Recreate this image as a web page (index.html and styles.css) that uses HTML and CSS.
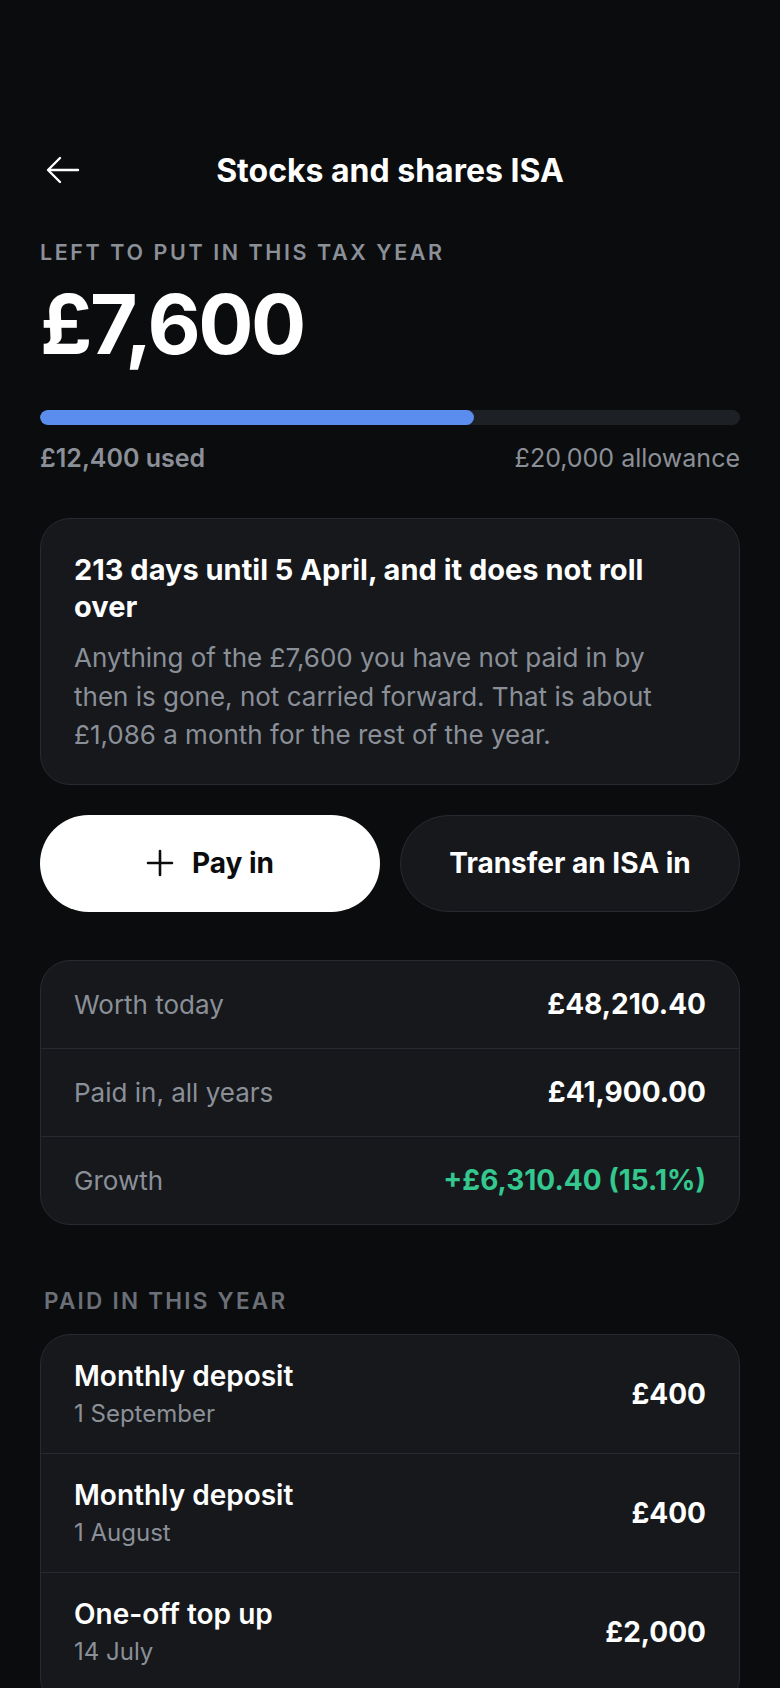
FILE: index.html
```html
<!DOCTYPE html>
<html lang="en">

<head>
    <meta charset="UTF-8">
    <meta name="viewport" content="width=device-width, initial-scale=1.0">
    <link rel="stylesheet" href="styles.css">
    <title>Stocks and shares ISA</title>
</head>

<body>
    <div class="screen">
        <header class="topbar">
            <button type="button" class="back" aria-label="Back">
                <svg width="34" height="28" viewBox="0 0 34 28" fill="none" stroke="#fff" stroke-width="2.4"
                    stroke-linecap="round" stroke-linejoin="round">
                    <path d="M32 14H3" />
                    <path d="M14 2L2 14l12 12" />
                </svg>
            </button>
            <h1 class="title">Stocks and shares ISA</h1>
        </header>

        <!-- Allowance left -->
        <section class="allowance">
            <p class="eyebrow">Left to put in this tax year</p>
            <p class="big">£7,600</p>
            <div class="bar">
                <div class="bar-fill" style="width: 62%"></div>
            </div>
            <div class="bar-legend">
                <span class="used">£12,400 used</span>
                <span class="total">£20,000 allowance</span>
            </div>
        </section>

        <div class="card notice">
            <h2>213 days until 5 April, and it does not roll over</h2>
            <p>Anything of the £7,600 you have not paid in by then is gone, not carried forward. That is about
                £1,086 a month for the rest of the year.</p>
        </div>

        <div class="actions">
            <button type="button" class="btn btn-light">
                <svg width="28" height="28" viewBox="0 0 28 28" fill="none" stroke="#0b0c0e" stroke-width="2.6"
                    stroke-linecap="round">
                    <path d="M14 2v24M2 14h24" />
                </svg>
                Pay in
            </button>
            <button type="button" class="btn btn-dark">Transfer an ISA in</button>
        </div>

        <div class="card rows stats">
            <div class="row">
                <span class="label">Worth today</span>
                <span class="value">£48,210.40</span>
            </div>
            <div class="row">
                <span class="label">Paid in, all years</span>
                <span class="value">£41,900.00</span>
            </div>
            <div class="row">
                <span class="label">Growth</span>
                <span class="value up">+£6,310.40 (15.1%)</span>
            </div>
        </div>

        <h3 class="section-title">Paid in this year</h3>
        <div class="card rows history">
            <div class="row tx">
                <div>
                    <div class="tx-name">Monthly deposit</div>
                    <div class="tx-date">1 September</div>
                </div>
                <span class="value">£400</span>
            </div>
            <div class="row tx">
                <div>
                    <div class="tx-name">Monthly deposit</div>
                    <div class="tx-date">1 August</div>
                </div>
                <span class="value">£400</span>
            </div>
            <div class="row tx">
                <div>
                    <div class="tx-name">One-off top up</div>
                    <div class="tx-date">14 July</div>
                </div>
                <span class="value">£2,000</span>
            </div>
        </div>
    </div>
</body>

</html>
```

FILE: styles.css
```css
body {
    margin: 0;
    background-color: #0b0c0e;
    color: #fff;
    font-family: Inter, "Noto Sans", sans-serif;
}

.screen {
    padding: 138px 40px 0;
}

.topbar {
    position: relative;
    height: 64px;
    display: flex;
    align-items: center;
    justify-content: center;
}

.back {
    position: absolute;
    left: 6px;
    top: 18px;
    padding: 0;
    border: 0;
    background: none;
    cursor: pointer;
}

.title {
    margin: 0;
    font-size: 32px;
    font-weight: 700;
}

.allowance {
    padding-top: 37px;
}

.eyebrow {
    margin: 0;
    font-size: 21.5px;
    line-height: 26px;
    font-weight: 600;
    letter-spacing: 0.12em;
    text-transform: uppercase;
    color: #8b9098;
}

.big {
    margin: 11px 0 0;
    font-size: 82px;
    font-weight: 700;
    letter-spacing: -0.03em;
    line-height: 1.2;
}

.bar {
    margin-top: 36px;
    height: 15px;
    border-radius: 8px;
    background: #1d2024;
    overflow: hidden;
}

.bar-fill {
    height: 100%;
    border-radius: 8px;
    background: #5b8def;
}

.bar-legend {
    display: flex;
    justify-content: space-between;
    margin-top: 18px;
    font-size: 25px;
    line-height: 30px;
    color: #8b9098;
}

.used {
    font-weight: 600;
}

.card {
    background: #16181c;
    border: 1px solid #272a30;
    border-radius: 30px;
}

.notice {
    margin-top: 45px;
    padding: 32px 33px 29px;
}

.notice h2 {
    margin: 0;
    font-size: 29px;
    font-weight: 700;
    line-height: 37px;
}

.notice p {
    margin: 14px 0 0;
    font-size: 26px;
    line-height: 38.5px;
    color: #8b9098;
}

.actions {
    display: grid;
    grid-template-columns: 1fr 1fr;
    gap: 20px;
    margin-top: 30px;
}

.btn {
    height: 97px;
    border-radius: 49px;
    display: flex;
    align-items: center;
    justify-content: center;
    gap: 18px;
    font-family: inherit;
    font-size: 28px;
    font-weight: 700;
    cursor: pointer;
}

.btn-light {
    background: #fff;
    color: #0b0c0e;
    border: 0;
}

.btn-dark {
    background: #16181c;
    color: #fff;
    border: 1px solid #272a30;
}

.rows {
    overflow: hidden;
}

.stats {
    margin-top: 48px;
}

.row {
    display: flex;
    align-items: center;
    justify-content: space-between;
    height: 87px;
    padding: 0 33px;
    border-top: 1px solid #272a30;
}

.row:first-child {
    border-top: 0;
}

.label {
    font-size: 26px;
    color: #8b9098;
}

.value {
    font-size: 28px;
    font-weight: 700;
}

.up {
    color: #34c78e;
}

.section-title {
    margin: 62px 0 0 4px;
    font-size: 22.5px;
    line-height: 27px;
    font-weight: 600;
    letter-spacing: 0.1em;
    text-transform: uppercase;
    color: #6b7078;
}

.section-title + .rows {
    margin-top: 20px;
}

.history {
    padding-bottom: 16px;
}

.tx {
    height: 118px;
}

.tx-name {
    font-size: 28px;
    line-height: 34px;
    font-weight: 600;
}

.tx-date {
    margin-top: 6px;
    font-size: 24px;
    line-height: 30px;
    color: #8b9098;
}
```
